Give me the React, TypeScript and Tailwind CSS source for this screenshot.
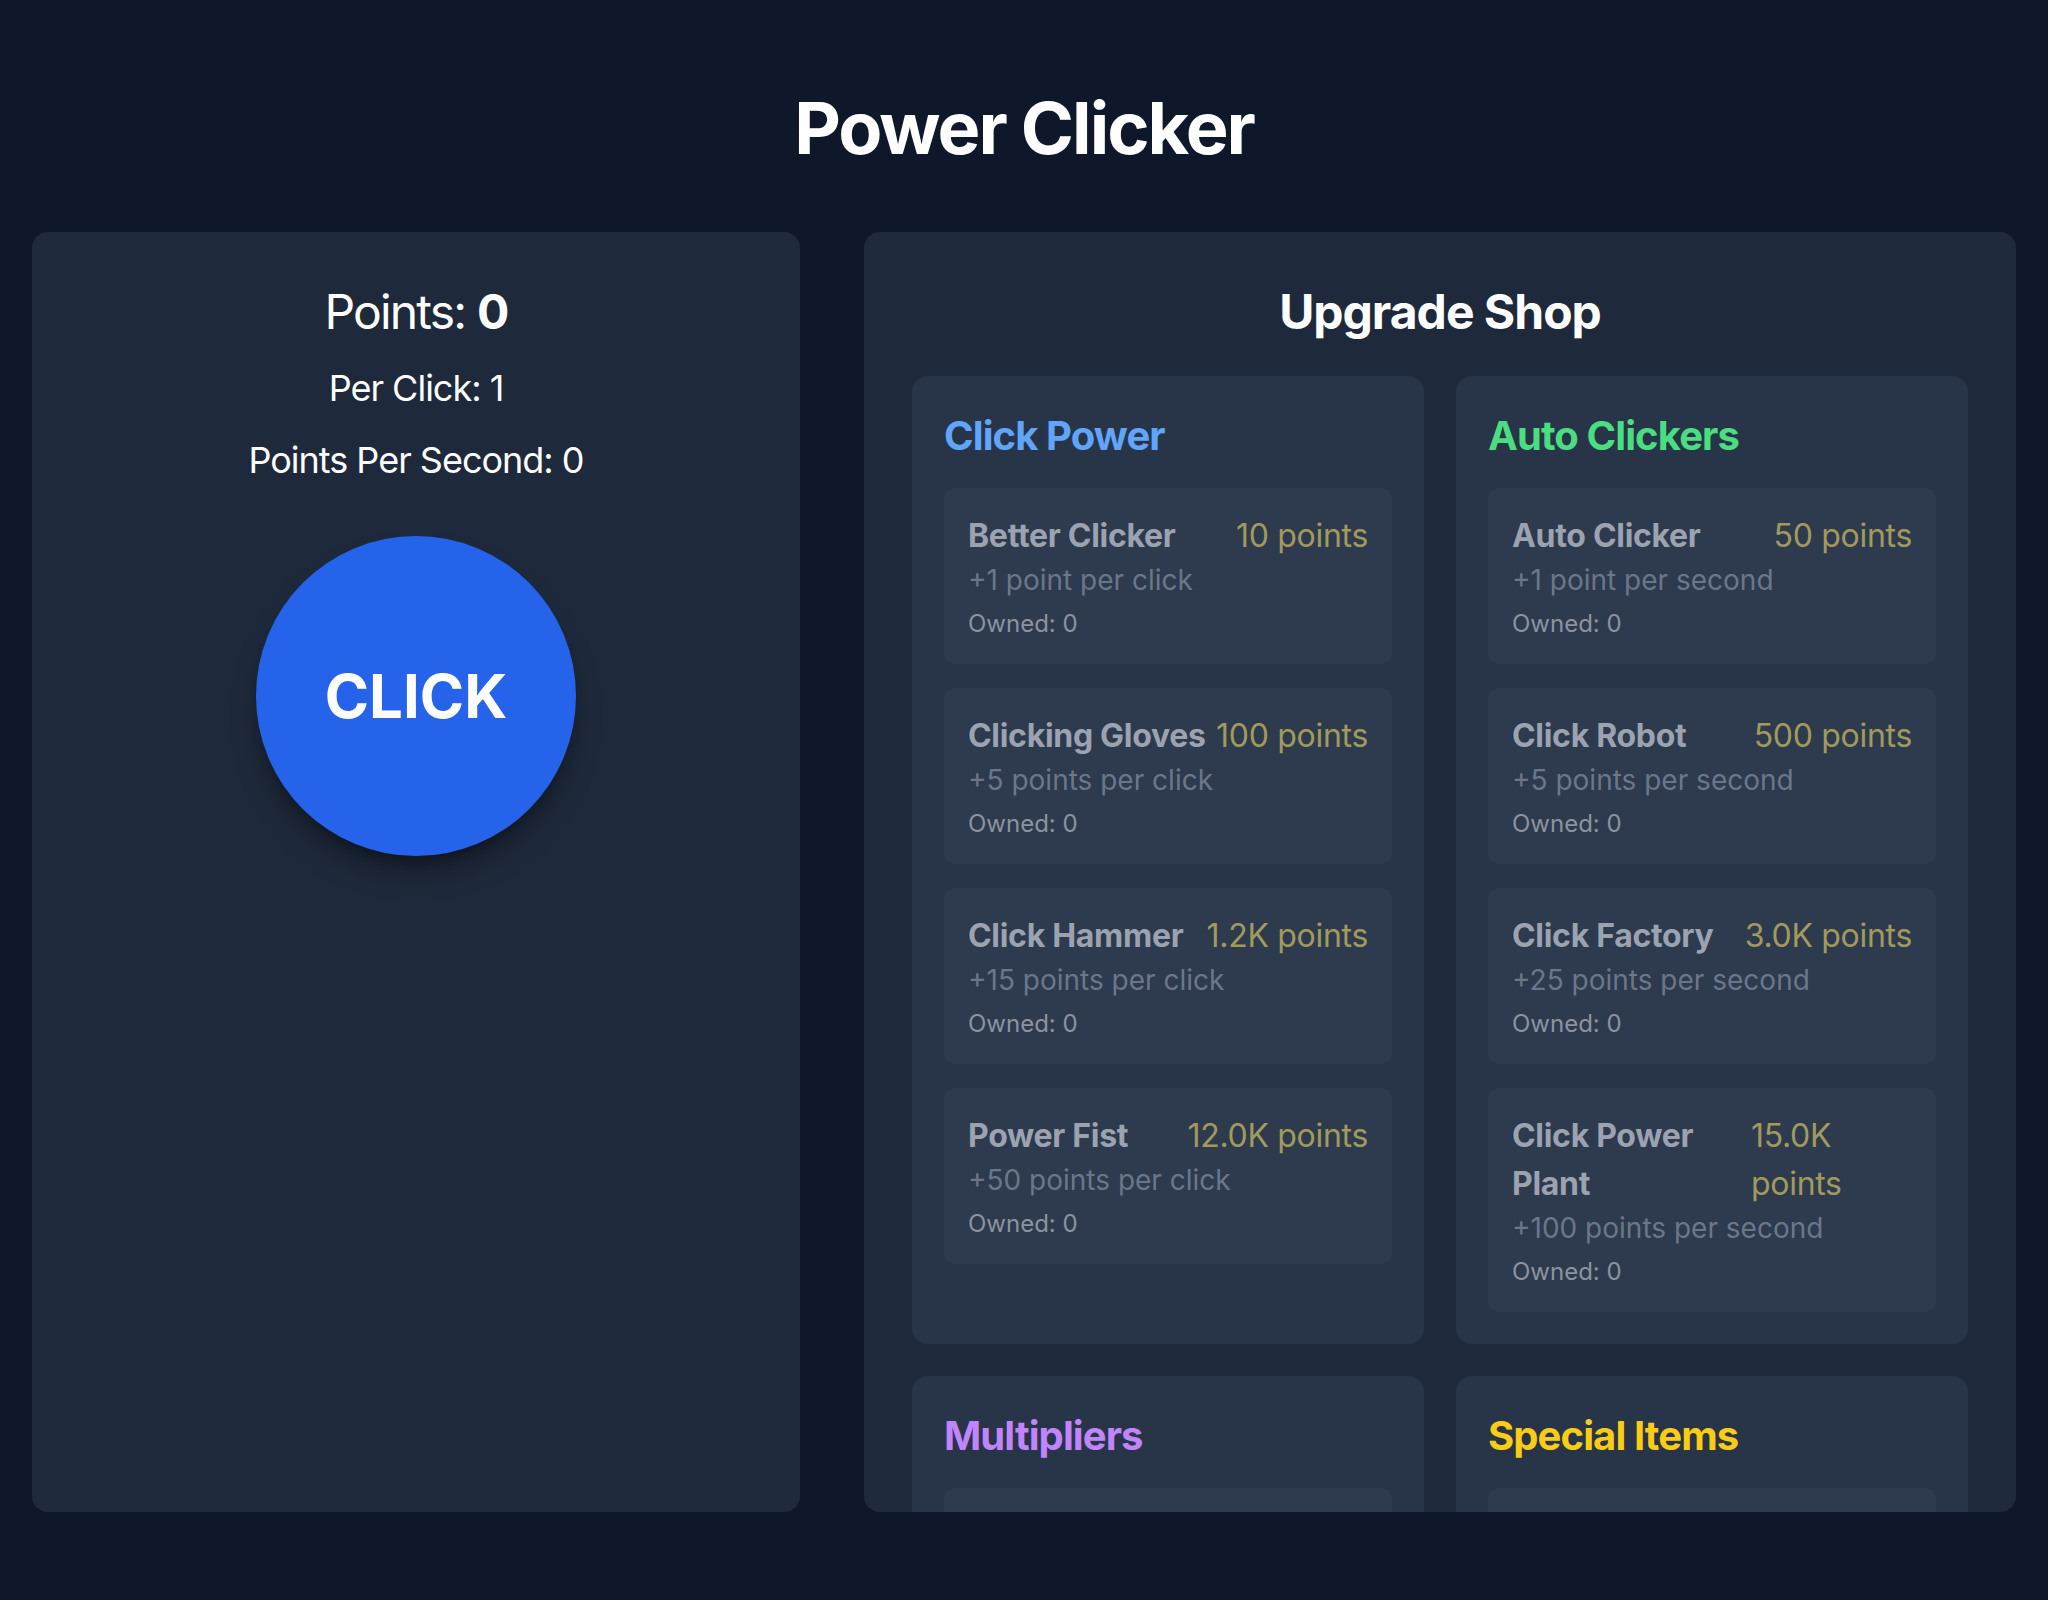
import { useState } from 'react';

type Upgrade = {
  id: string;
  name: string;
  cost: number;
  desc: string;
};

type Category = {
  title: string;
  color: string;
  items: Upgrade[];
};

const categories: Category[] = [
  {
    title: 'Click Power',
    color: 'text-[#60a5fa]',
    items: [
      { id: 'better', name: 'Better Clicker', cost: 10, desc: '+1 point per click' },
      { id: 'gloves', name: 'Clicking Gloves', cost: 100, desc: '+5 points per click' },
      { id: 'hammer', name: 'Click Hammer', cost: 1200, desc: '+15 points per click' },
      { id: 'fist', name: 'Power Fist', cost: 12000, desc: '+50 points per click' },
    ],
  },
  {
    title: 'Auto Clickers',
    color: 'text-[#4ade80]',
    items: [
      { id: 'auto', name: 'Auto Clicker', cost: 50, desc: '+1 point per second' },
      { id: 'robot', name: 'Click Robot', cost: 500, desc: '+5 points per second' },
      { id: 'factory', name: 'Click Factory', cost: 3000, desc: '+25 points per second' },
      { id: 'plant', name: 'Click Power Plant', cost: 15000, desc: '+100 points per second' },
    ],
  },
  {
    title: 'Multipliers',
    color: 'text-[#c084fc]',
    items: [
      { id: 'double', name: 'Double Click', cost: 25000, desc: '2x points per click' },
      { id: 'turbo', name: 'Turbo Mode', cost: 100000, desc: '2x points per second' },
    ],
  },
  {
    title: 'Special Items',
    color: 'text-[#facc15]',
    items: [
      { id: 'charm', name: 'Lucky Charm', cost: 50000, desc: '10% chance of 10x click' },
      { id: 'crown', name: 'Golden Crown', cost: 250000, desc: '+500 points per second' },
    ],
  },
];

const formatNumber = (n: number) => (n >= 1000 ? `${(n / 1000).toFixed(1)}K` : `${n}`);

export default function App() {
  const [points, setPoints] = useState(0);
  const [owned, setOwned] = useState<Record<string, number>>({});
  const perClick = 1;
  const perSecond = 0;

  const buy = (item: Upgrade) => {
    if (points < item.cost) return;
    setPoints((p) => p - item.cost);
    setOwned((prev) => ({ ...prev, [item.id]: (prev[item.id] ?? 0) + 1 }));
  };

  return (
    <div className="min-h-screen bg-[#0f172a] px-8 pt-[88px] pb-8 text-white font-['Inter','Noto_Sans',sans-serif]">
      <h1 className="text-center text-[72px] leading-[80px] font-bold tracking-[-2px] mb-16">Power Clicker</h1>

      <div className="grid grid-cols-[2fr_3fr] gap-16">
        {/* Left: stats + big button */}
        <div className="h-[1280px] bg-[#1e293b] rounded-[16px] p-12 flex flex-col items-center">
          <p className="text-[48px] leading-[64px] tracking-[-1.8px]">
            Points: <span className="font-bold">{formatNumber(points)}</span>
          </p>
          <p className="text-[36px] leading-[56px] tracking-[-1px] mt-4">Per Click: {perClick}</p>
          <p className="text-[36px] leading-[56px] tracking-[-1px] mt-4">Points Per Second: {perSecond}</p>
          <button
            onClick={() => setPoints((p) => p + perClick)}
            className="mt-12 w-[320px] h-[320px] rounded-full bg-[#2563eb] text-[60px] font-bold shadow-[0_20px_30px_-6px_rgba(0,0,0,0.35),0_8px_12px_-6px_rgba(0,0,0,0.3)]"
          >
            CLICK
          </button>
        </div>

        {/* Right: shop */}
        <div className="h-[1280px] bg-[#1e293b] rounded-[16px] p-12 overflow-hidden">
          <h2 className="text-center text-[48px] leading-[64px] font-bold tracking-[-1px] mb-8">Upgrade Shop</h2>
          <div className="grid grid-cols-2 gap-8">
            {categories.map((cat) => (
              <div key={cat.title} className="bg-[#283548] rounded-[16px] p-8">
                <h3 className={`text-[40px] leading-[56px] font-bold tracking-[-0.9px] mb-6 ${cat.color}`}>{cat.title}</h3>
                <div className="flex flex-col gap-6">
                  {cat.items.map((item) => (
                    <div
                      key={item.id}
                      onClick={() => buy(item)}
                      className="bg-[#2e3a4e] rounded-[10px] p-6 cursor-not-allowed"
                    >
                      <div className="flex justify-between">
                        <span className="text-[32px] leading-[48px] font-bold text-[#9ba3b0] tracking-[-0.3px]">
                          {item.name}
                        </span>
                        <span className="text-[32px] leading-[48px] text-[#a19a5b] tracking-[-0.3px]">
                          {formatNumber(item.cost)} points
                        </span>
                      </div>
                      <p className="text-[28px] leading-[40px] text-[#6b7789]">{item.desc}</p>
                      <p className="text-[24px] leading-[32px] mt-2 text-[#8b93a0]">Owned: {owned[item.id] ?? 0}</p>
                    </div>
                  ))}
                </div>
              </div>
            ))}
          </div>
        </div>
      </div>
    </div>
  );
}
